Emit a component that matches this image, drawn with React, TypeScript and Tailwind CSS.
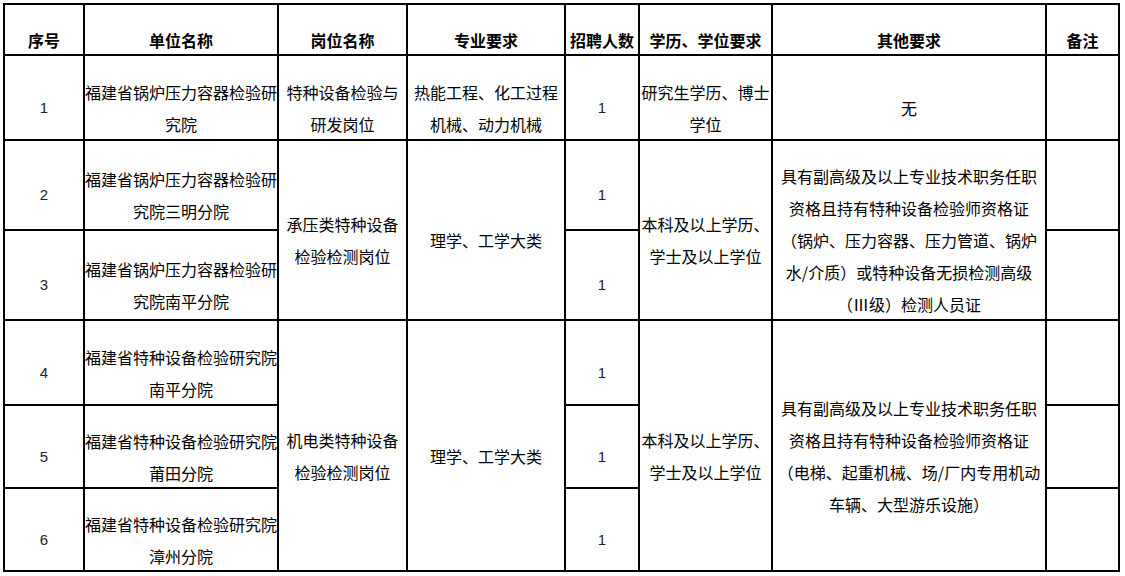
import React from "react";

const font = {
  fontFamily: '"Noto Sans CJK SC", "Noto Sans", sans-serif',
};

function Cell({
  className = "",
  children,
}: {
  className?: string;
  children?: React.ReactNode;
}) {
  return (
    <div
      className={
        "bg-white flex flex-col items-center justify-center text-center pt-[20px] text-[16px] leading-[32px] text-black whitespace-nowrap " +
        className
      }
    >
      {children}
    </div>
  );
}

function Num({ n, className = "" }: { n: string; className?: string }) {
  return (
    <Cell className={className}>
      <span className="font-['Liberation_Sans',sans-serif] text-[15px] text-[#222]">{n}</span>
    </Cell>
  );
}

function Head({ children, className = "" }: { children: React.ReactNode; className?: string }) {
  return (
    <Cell className={"font-bold text-[#222] " + className}>{children}</Cell>
  );
}

export default function App() {
  return (
    <div className="min-h-[576px] w-[1125px] bg-white" style={font}>
      <div className="ml-[3px] pt-[3px]">
        <div className="inline-grid bg-black p-[2px] gap-[2px] grid-cols-[78px_192px_127px_156px_72px_131px_272px_71px] grid-rows-[49px_83px_88px_88px_83px_81px_81px]">
          {/* header */}
          <Head className="row-start-1 col-start-1">序号</Head>
          <Head className="row-start-1 col-start-2">单位名称</Head>
          <Head className="row-start-1 col-start-3">岗位名称</Head>
          <Head className="row-start-1 col-start-4">专业要求</Head>
          <Head className="row-start-1 col-start-5">招聘人数</Head>
          <Head className="row-start-1 col-start-6">学历、学位要求</Head>
          <Head className="row-start-1 col-start-7">其他要求</Head>
          <Head className="row-start-1 col-start-8">备注</Head>

          {/* row 1 */}
          <Num n="1" className="row-start-2 col-start-1" />
          <Cell className="row-start-2 col-start-2">
            <span>福建省锅炉压力容器检验研</span>
            <span>究院</span>
          </Cell>
          <Cell className="row-start-2 col-start-3">
            <span>特种设备检验与</span>
            <span>研发岗位</span>
          </Cell>
          <Cell className="row-start-2 col-start-4">
            <span>热能工程、化工过程</span>
            <span>机械、动力机械</span>
          </Cell>
          <Num n="1" className="row-start-2 col-start-5" />
          <Cell className="row-start-2 col-start-6">
            <span>研究生学历、博士</span>
            <span>学位</span>
          </Cell>
          <Cell className="row-start-2 col-start-7">无</Cell>
          <Cell className="row-start-2 col-start-8" />

          {/* rows 2-3 */}
          <Num n="2" className="row-start-3 col-start-1" />
          <Cell className="row-start-3 col-start-2">
            <span>福建省锅炉压力容器检验研</span>
            <span>究院三明分院</span>
          </Cell>
          <Num n="3" className="row-start-4 col-start-1" />
          <Cell className="row-start-4 col-start-2">
            <span>福建省锅炉压力容器检验研</span>
            <span>究院南平分院</span>
          </Cell>
          <Cell className="row-start-3 row-span-2 col-start-3">
            <span>承压类特种设备</span>
            <span>检验检测岗位</span>
          </Cell>
          <Cell className="row-start-3 row-span-2 col-start-4">
            <span>理学、工学大类</span>
          </Cell>
          <Num n="1" className="row-start-3 col-start-5" />
          <Num n="1" className="row-start-4 col-start-5" />
          <Cell className="row-start-3 row-span-2 col-start-6">
            <span>本科及以上学历、</span>
            <span>学士及以上学位</span>
          </Cell>
          <Cell className="row-start-3 row-span-2 col-start-7">
            <span>具有副高级及以上专业技术职务任职</span>
            <span>资格且持有特种设备检验师资格证</span>
            <span>（锅炉、压力容器、压力管道、锅炉</span>
            <span>水/介质）或特种设备无损检测高级</span>
            <span>（Ⅲ级）检测人员证</span>
          </Cell>
          <Cell className="row-start-3 col-start-8" />
          <Cell className="row-start-4 col-start-8" />

          {/* rows 4-6 */}
          <Num n="4" className="row-start-5 col-start-1" />
          <Cell className="row-start-5 col-start-2">
            <span>福建省特种设备检验研究院</span>
            <span>南平分院</span>
          </Cell>
          <Num n="5" className="row-start-6 col-start-1" />
          <Cell className="row-start-6 col-start-2">
            <span>福建省特种设备检验研究院</span>
            <span>莆田分院</span>
          </Cell>
          <Num n="6" className="row-start-7 col-start-1" />
          <Cell className="row-start-7 col-start-2">
            <span>福建省特种设备检验研究院</span>
            <span>漳州分院</span>
          </Cell>
          <Cell className="row-start-5 row-span-3 col-start-3">
            <span>机电类特种设备</span>
            <span>检验检测岗位</span>
          </Cell>
          <Cell className="row-start-5 row-span-3 col-start-4">
            <span>理学、工学大类</span>
          </Cell>
          <Num n="1" className="row-start-5 col-start-5" />
          <Num n="1" className="row-start-6 col-start-5" />
          <Num n="1" className="row-start-7 col-start-5" />
          <Cell className="row-start-5 row-span-3 col-start-6">
            <span>本科及以上学历、</span>
            <span>学士及以上学位</span>
          </Cell>
          <Cell className="row-start-5 row-span-3 col-start-7">
            <span>具有副高级及以上专业技术职务任职</span>
            <span>资格且持有特种设备检验师资格证</span>
            <span>（电梯、起重机械、场/厂内专用机动</span>
            <span>车辆、大型游乐设施）</span>
          </Cell>
          <Cell className="row-start-5 col-start-8" />
          <Cell className="row-start-6 col-start-8" />
          <Cell className="row-start-7 col-start-8" />
        </div>
      </div>
    </div>
  );
}
